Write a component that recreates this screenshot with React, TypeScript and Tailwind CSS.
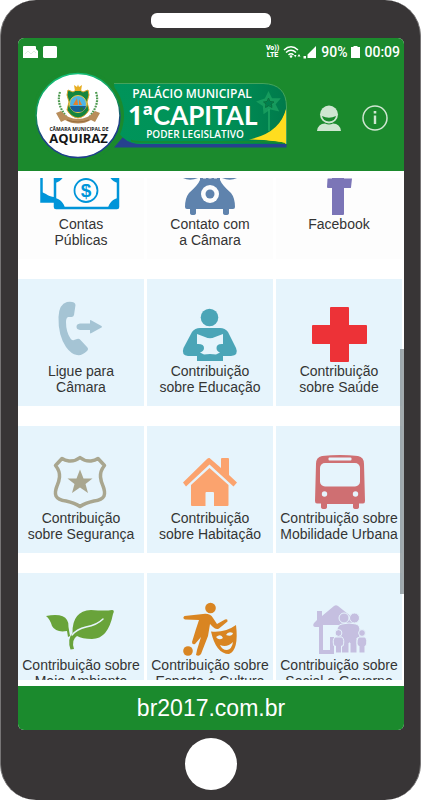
import { useLayoutEffect, useRef } from "react";
import type { ReactNode } from "react";

type Item = {
  lines: string[];
  icon: ReactNode;
  plain?: boolean;
};

function Icon({ children }: { children: ReactNode }) {
  return (
    <svg viewBox="0 0 126 84" className="h-[84px] w-[126px] shrink-0" aria-hidden="true">
      {children}
    </svg>
  );
}

const items: Item[] = [
  {
    lines: ["Contas", "Públicas"],
    plain: true,
    icon: (
      <Icon>
        <g fill="none" stroke="#0095d9" strokeWidth="2.5">
          <path d="M33 34H23.5V69.5H36" />
          <rect x="37" y="40" width="63" height="36" rx="1" />
          <circle cx="68" cy="58.5" r="11.5" strokeWidth="1.8" />
        </g>
        <g fill="#0095d9">
          <path d="M23 60C28 61 31 65 36 65V70H23z" />
          <path d="M37 66C42 67 46 71 47 76H37zM100 66C95 67 91 71 90 76H100zM37 51C42 50 46 46 47 40H37zM100 51C95 50 91 46 90 40H100z" />
        </g>
        <text x="68" y="65" textAnchor="middle" fontSize="19" fontWeight="700" fontFamily="Liberation Sans, sans-serif" fill="#0095d9">
          $
        </text>
      </Icon>
    ),
  },
  {
    lines: ["Contato com", "a Câmara"],
    plain: true,
    icon: (
      <Icon>
        <g fill="#5f83ad">
          <path d="M36 38H51V46Q43 49.500 36 46zM75 38H90V46Q83 49.500 75 46z" />
          <path d="M53 42H56V46.500H59V42H61.500V46.500H64.500V42H67V46.500H70V42H73V48Q75 53 84 61Q88 66 88 75Q88 77 86 77H82V81Q82 83 79 83Q76 83 76 81V77H49V81Q49 83 46 83Q43 83 43 81V77H40Q38 77 38 75Q38 66 42 61Q51 53 53 48z" />
        </g>
        <circle cx="63" cy="62" r="9" fill="#fdfdfd" />
        <circle cx="63" cy="62" r="4.500" fill="#5f83ad" />
      </Icon>
    ),
  },
  {
    lines: ["Facebook"],
    plain: true,
    icon: (
      <Icon>
        <path
          fill="#7b75b7"
          d="M56 83V56H52Q51 56 51 55L51.500 47Q51.500 46.500 52 46.500H56V38Q56 30 66 30H75V38H70Q68 38 68 41V46.500H76L75 55.500Q75 56 74 56H68V82Q68 83 67 83z"
        />
      </Icon>
    ),
  },
  {
    lines: ["Ligue para", "Câmara"],
    icon: (
      <Icon>
        <g fill="#a5c4d4">
          <path d="M49 23Q57 22 57.500 26L56 36Q55.500 38 53.500 38H50Q48 39 48 43Q48 53 52.500 59.500Q54 62 56 61L59 60Q61 59 62.500 61L69 68Q71 70 69 72Q64 77 59 76Q53 75 48 68Q40 56 40.500 38Q41 25 49 23z" />
          <path d="M62 44.500H72V42Q72 40.500 73.500 41.500L83.500 47Q84.500 48 83.500 48.500L73.500 54Q72 55 72 53.500V51H62Q58.500 50.500 58.500 47.800Q58.500 45 62 44.500z" />
        </g>
      </Icon>
    ),
  },
  {
    lines: ["Contribuição", "sobre Educação"],
    icon: (
      <Icon>
        <g fill="#4ba5b7">
          <circle cx="62.500" cy="38.500" r="8.800" />
          <path d="M53 49H73Q78 49 81 53L89 69Q92 76 84 77H76V82H50V77H41Q34 76 36.500 69L45 53Q48 49 53 49z" />
        </g>
        <path
          fill="#e6f4fc"
          d="M50 55L58 58Q63 60.500 68 58L76 55V65Q69.500 64.500 69.500 69Q69.500 72 73 73.500L69 75.500Q63 74.500 57 75.500L53 73.500Q57 72 57 69Q57 64.500 50 65z"
        />
      </Icon>
    ),
  },
  {
    lines: ["Contribuição", "sobre Saúde"],
    icon: (
      <Icon>
        <g fill="#ed3237">
          <rect x="54" y="28" width="19" height="55" rx="1" />
          <rect x="36" y="46" width="55" height="19" rx="1" />
        </g>
      </Icon>
    ),
  },
  {
    lines: ["Contribuição", "sobre Segurança"],
    icon: (
      <Icon>
        <path
          fill="none"
          stroke="#a9a68f"
          strokeWidth="3.500"
          strokeLinejoin="round"
          d="M62 31.500Q67 35.500 73 35Q77 34.500 80 32.500L86.500 39.500Q82 45 82.500 51Q83 56 85 60Q87.500 66 86 70Q84 74 76 75Q67 77 62 80.500Q57 77 48 75Q40 74 38 70Q36.500 66 39 60Q41 56 41.500 51Q42 45 37.500 39.500L44 32.500Q47 34.500 51 35Q57 35.500 62 31.500z"
        />
        <path fill="#a9a68f" d="M62 43.500L65.500 52.500H74.500L67.500 58L70 67L62 61.500L54 67L56.500 58L49.500 52.500H58.500z" />
      </Icon>
    ),
  },
  {
    lines: ["Contribuição", "sobre Habitação"],
    icon: (
      <Icon>
        <g fill="#fba36e">
          <path d="M62.500 32L74 42V33Q74 32 75 32H81Q82 32 82 33V49L90 56.500L86.500 60.500L62.500 38.500L39 60.500L36 56.500L60 33Q61.500 31.500 62.500 32z" />
          <path d="M62.500 42L81.500 59V79Q81.500 80 80.500 80H67V67Q67 66 66 66H59.500Q58.500 66 58.500 67V80H45Q44 80 44 79V59z" />
        </g>
      </Icon>
    ),
  },
  {
    lines: ["Contribuição sobre", "Mobilidade Urbana"],
    icon: (
      <Icon>
        <path
          fill="#cf6f72"
          d="M46 30Q64 28 82 30Q88 31 88 38L89 75Q89 77.500 87 77.500H83V81Q83 83 80 83Q77 83 77 81V78H51V81Q51 83 48 83Q45 83 45 81V77.500H41Q39 77.500 39 75L40 38Q40 31 46 30z"
        />
        <rect x="52.500" y="31.500" width="23" height="3" rx="1" fill="#e6f4fc" />
        <rect x="44" y="37" width="40" height="23.500" rx="5" fill="#e6f4fc" />
        <circle cx="48.500" cy="68" r="2.700" fill="#e6f4fc" />
        <circle cx="79.500" cy="68" r="2.700" fill="#e6f4fc" />
      </Icon>
    ),
  },
  {
    lines: ["Contribuição sobre", "Meio Ambiente"],
    icon: (
      <Icon>
        <g fill="#69a33a">
          <path d="M28 43Q45 40 49 47Q51 50 50.500 54L52 63L50 64L49 58Q38 60 34 53Q32 46 28 43z" />
          <path d="M54.500 60Q54 38 73 37Q88 38 94 37Q97 37 95 41Q90 66 74 66Q64 66 59 63Q53 67 56 76L52.500 76.500Q49 66 54.500 60z" />
        </g>
        <path fill="none" stroke="#e6f4fc" strokeWidth="1.500" strokeLinecap="round" d="M54 62Q59 56 68 54Q79 52 85 46" />
      </Icon>
    ),
  },
  {
    lines: ["Contribuição sobre", "Esporte e Cultura"],
    icon: (
      <Icon>
        <g fill="#d98522">
          <circle cx="63.500" cy="35" r="5.300" />
          <circle cx="41" cy="78" r="4.800" />
          <path d="M37.500 43L56 41Q63 40 66 45L70 51L78 46.500Q81 45.500 80.500 48.500L72 55.500Q69 57 66 54L63 51L61 63L54 81Q52 84 49 82L50 77L54 64L48 71Q45 72 45 69L49 56L52 47L38 46.500Q35 45 37.500 43z" />
          <path d="M64 58.500Q78 60 89 52Q92 77 82 81Q69 81 64 58.500z" />
        </g>
        <g fill="#e6f4fc">
          <path d="M69 64Q74 60 76 65Q72 68 69 64zM79 62Q81 58 86 60Q85 64 79 62zM73 72Q80 75 86 69Q85 76 80 77Q75 77 73 72z" />
        </g>
      </Icon>
    ),
  },
  {
    lines: ["Contribuição sobre", "Social e Governo"],
    icon: (
      <Icon>
        <g fill="#c5bfe0">
          <path d="M41 38H46V43L58 33Q60 31.500 62 33L82 49L66 52H47V77H54V64H58V81H43V54H39Q36 53 38 50L41 47z" />
        </g>
        <g fill="#c5bfe0" stroke="#e6f4fc" strokeWidth="1">
          <path d="M66 51Q73 49 80 51Q84 52 84 58V65H81V80H74V70H73V80H64V65H61V58Q61 52 66 51z" />
          <circle cx="68" cy="45" r="5" />
          <circle cx="78.500" cy="45" r="5" />
          <path d="M59 64H66Q69 67 67 73H65.500V80H59.500V73H58Q56 67 59 64zM83 64H89Q92 67 90 73H89V80H83V73H81.500Q80 67 83 64z" />
          <circle cx="62.500" cy="60" r="3.400" />
          <circle cx="86" cy="60" r="3.400" />
        </g>
      </Icon>
    ),
  },
];

function StatusBar() {
  return (
    <div className="flex h-7 items-center justify-between pr-1 pl-1 font-['Roboto',sans-serif] text-sm font-medium text-white">
      <svg viewBox="0 0 36 14" className="h-[14px] w-9" fill="#fff" aria-hidden="true">
        <path d="M1 2Q1 1 2 1H13Q14 1 14 2V4L16 6V13H1z" />
        <rect x="21" y="1" width="14" height="12" rx="1.500" />
        <path d="M3 9L6 6L9 9L12 6L14 8" fill="none" stroke="#d8ead9" strokeWidth=".8" />
      </svg>
      <div className="flex items-center gap-1">
        <div className="flex flex-col items-center text-[7px] leading-[7px] font-black">
          <span>Vo))</span>
          <span>LTE</span>
        </div>
        <svg viewBox="0 0 34 14" className="h-[14px] w-[34px]" fill="#fff" aria-hidden="true">
          <g fill="none" stroke="#fff" strokeWidth="1.500">
            <path d="M1 5Q8 -1.500 15 5M3 7.500Q8 3 13 7.500M5.500 10Q8 7.500 10.500 10" />
          </g>
          <circle cx="8" cy="11.500" r="1.300" />
          <path d="M11 10H13.500L12.200 12.500zM14.500 11.500L16 9L17.500 11.500z" />
          <path d="M33 1V13H24.500V9.500zM20.500 11H23V13.500H20.500z" />
        </svg>
        <span>90%</span>
        <svg viewBox="0 0 9 14" className="h-[14px] w-[9px]" fill="#fff" aria-hidden="true">
          <path d="M2.500 1H6.500V2H9V13H0V2H2.500z" />
        </svg>
        <span>00:09</span>
      </div>
    </div>
  );
}

function Logo() {
  return (
    <svg viewBox="0 0 253 89" className="h-[89px] w-[253px] shrink-0" role="img" aria-label="Câmara Municipal de Aquiraz">
      <defs>
        <linearGradient id="ring" x1="0.3" y1="0" x2="0.500" y2="1">
          <stop offset="0" stopColor="#14c47c" />
          <stop offset="0.450" stopColor="#138b55" />
          <stop offset="0.700" stopColor="#1e3f86" />
          <stop offset="1" stopColor="#1f3f8c" />
        </linearGradient>
        <linearGradient id="banner" x1="0" x2="1">
          <stop offset="0" stopColor="#00945a" />
          <stop offset="0.600" stopColor="#009257" />
          <stop offset="1" stopColor="#007a4b" />
        </linearGradient>
      </defs>
      <path d="M79 76.500L88 66Q95 73 105 73H251.500V76.500z" fill="#26418f" />
      <path d="M213 68Q246 62 251.500 37V73Q238 69 213 68z" fill="#ffdd1f" />
      <path
        d="M79 12.500H228Q251.500 13 251.500 36Q245 66 213 69Q238 69 250 73H105Q90 72 84 62z"
        fill="url(#banner)"
      />
      <path d="M79 12.500H228Q251.500 13 251.500 36V73" fill="none" stroke="#45a35c" strokeWidth="1" />
      <path d="M96 69.500Q100 71 108 71H222Q240 70 250 72.500" fill="none" stroke="#1b8a2d" strokeWidth="1.500" />
      <path d="M214 68.500Q245 62 251 38V72Q238 68.500 214 68.500z" fill="#ffdd1f" />
      <circle cx="43" cy="44.500" r="46" fill="#1b8a2d" />
      <circle cx="43" cy="44.500" r="42" fill="#fff" stroke="url(#ring)" strokeWidth="1.600" />

      <g fill="none" stroke="#1fa764" strokeWidth="1.500">
        <path d="M234 38V60" />
        <path d="M233.500 24L236 29L242 29L238.500 33L241 38L235 36.500L230 40L229.500 34L225 31L231 29z" strokeWidth="3.500" opacity=".7" />
        <path d="M233.500 27L235 30.500L239 31L236 33L237 36.500L233.500 34.500L230.500 36.500L231 33L228.500 31L232 30.500z" stroke="#08713f" strokeWidth="1" />
      </g>

      {/* brasão */}
      <g>
        <path d="M25 21Q21 33 31 45M61 21Q65 33 55 45" fill="none" stroke="#4d9a50" strokeWidth="2.200" strokeDasharray="1.800 1" />
        <path d="M26 40Q33 48 43 48Q53 48 60 40L65 42L60 51L56 49Q50 52.500 43 52.500Q36 52.500 30 49L26 51L21 42z" fill="#b98e5c" />
        <path d="M32 49Q43 53 54 49" fill="none" stroke="#8d6335" strokeWidth=".8" />
        <path d="M33 19L38 21L43 18L48 21L53 19L54 24L52 31L54 39Q50 46 43 47Q36 46 32 39L34 31L32 24z" fill="#14853f" stroke="#d7a62b" strokeWidth="1" />
        <path d="M40 20L39 14L42 16L43 13.500L44 16L47 14L46 20z" fill="#e7ae22" />
        <circle cx="43" cy="33" r="8.500" fill="#4fb5e6" stroke="#efc843" strokeWidth="1" />
        <path d="M35 35H51Q50 41 43 41Q36 41 35 35z" fill="#18609b" />
        <path d="M38 34L42 27L43 34zM44 34V28L47 34z" fill="#e5812a" />
        <circle cx="46.500" cy="38" r="2" fill="#217741" />
      </g>
      <g textAnchor="middle" fill="#171717" fontFamily="Open Sans, sans-serif" fontWeight="700">
        <text x="44" y="60" fontSize="5">CÂMARA MUNICIPAL DE</text>
        <text x="43.500" y="72" fontSize="13">AQUIRAZ</text>
      </g>
      <g textAnchor="middle" fill="#fff" fontFamily="Open Sans, sans-serif" fontWeight="600">
        <text x="157" y="27" fontSize="12">PALÁCIO MUNICIPAL</text>
        <text x="160" y="67" fontSize="10">PODER LEGISLATIVO</text>
      </g>
      <g fill="#fff" fontWeight="700">
        <text x="93" y="54" fontSize="26" fontFamily="Open Sans, sans-serif">1ª</text>
        <text x="118" y="54" fontSize="26" fontFamily="Lato, sans-serif">CAPITAL</text>
      </g>
    </svg>
  );
}

function Header() {
  return (
    <header className="h-[133px] shrink-0 bg-[#1b8a2d]">
      <StatusBar />
      <div className="flex items-center pt-[5px] pr-4 pl-[17px]">
        <Logo />
        <div className="ml-auto flex items-center gap-5 pt-1">
          <button type="button" aria-label="Perfil">
            <svg viewBox="0 0 26 26" className="size-[26px]" fill="#cfe6d1">
              <circle cx="13" cy="9.500" r="9" />
              <path d="M6 11Q13 14.500 20 11Q19 16 13 16.500Q7 16 6 11z" fill="#1b8a2d" />
              <path d="M1 26Q2 18.500 9 18.500Q13 20.500 17 18.500Q24 18.500 25 26z" />
            </svg>
          </button>
          <button type="button" aria-label="Informações">
            <svg viewBox="0 0 26 26" className="size-[26px]" fill="none" stroke="#cfe6d1" strokeWidth="1.500">
              <circle cx="13" cy="13" r="12" />
              <path d="M13 10.500V19" strokeWidth="2.400" />
              <path d="M13 6V8.500" strokeWidth="2.600" />
            </svg>
          </button>
        </div>
      </div>
    </header>
  );
}

function Tile({ item }: { item: Item }) {
  return (
    <button
      type="button"
      className={`flex h-[127px] flex-col items-center overflow-hidden text-sm leading-4 text-[#343434] ${item.plain ? "bg-[#fdfdfd]" : "bg-[#e6f4fc]"}`}
    >
      {item.icon}
      {item.lines.map((line) => (
        <span key={line} className="whitespace-nowrap">
          {line}
        </span>
      ))}
    </button>
  );
}

export default function App() {
  const list = useRef<HTMLDivElement>(null);

  useLayoutEffect(() => {
    if (list.current) list.current.scrollTop = 46;
  }, []);

  return (
    <div className="flex h-screen flex-col items-center rounded-[36px] border-x border-[#777576] bg-[#383536] pr-4 pl-[17px] font-['Liberation_Sans',Arial,sans-serif]">
      <div className="mt-[13px] mb-[10px] h-[15px] w-[120px] shrink-0 rounded-md bg-white" />
      <div className="flex min-h-0 w-full flex-1 flex-col overflow-hidden rounded-md bg-white">
        <Header />
        <main className="relative flex min-h-0 flex-1 flex-col pt-[7px] pb-[6px]">
          <div ref={list} className="min-h-0 flex-1 overflow-y-auto pr-[2px] [scrollbar-width:none]">
            <div className="grid grid-cols-3 gap-x-[3px] gap-y-5">
              {items.map((item) => (
                <Tile key={item.lines.join(" ")} item={item} />
              ))}
            </div>
          </div>
          <div className="absolute top-[178px] right-0 h-[245px] w-1 bg-[#8b9599]/80" />
        </main>
        <footer className="flex h-11 shrink-0 items-center justify-center bg-[#1b8a2d]">
          <a href="#" className="text-[23px] leading-7 text-white">
            br2017.com.br
          </a>
        </footer>
      </div>
      <button type="button" aria-label="Início" className="mt-2 mb-[10px] size-[52px] shrink-0 rounded-full bg-white" />
    </div>
  );
}
